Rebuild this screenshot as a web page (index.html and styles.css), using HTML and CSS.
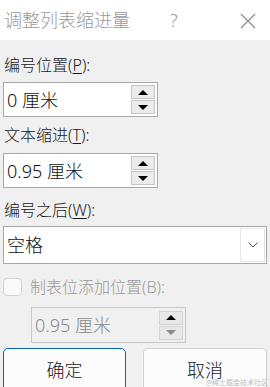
FILE: index.html
```html
<!DOCTYPE html>
<html lang="zh-CN">
<head>
    <meta charset="UTF-8">
    <meta name="viewport" content="width=device-width, initial-scale=1.0">
    <title>调整列表缩进量</title>
    <link rel="stylesheet" href="styles.css">
</head>
<body>
    <div class="dialog">
        <div class="titlebar">
            <span class="title">调整列表缩进量</span>
            <span class="help">?</span>
            <svg class="close" width="16" height="16" viewBox="0 0 16 16">
                <path d="M1 1 L15 15 M15 1 L1 15" stroke="#8a8a8a" stroke-width="1.2" fill="none"/>
            </svg>
        </div>

        <div class="content">
            <!-- 编号位置 -->
            <label class="label first">编号位置(<u>P</u>):</label>
            <div class="spin">
                <span class="value">0 厘米</span>
                <div class="arrows">
                    <span class="arrow up"></span>
                    <span class="arrow down"></span>
                </div>
            </div>

            <!-- 文本缩进 -->
            <label class="label">文本缩进(<u>T</u>):</label>
            <div class="spin">
                <span class="value">0.95 厘米</span>
                <div class="arrows">
                    <span class="arrow up"></span>
                    <span class="arrow down"></span>
                </div>
            </div>

            <!-- 编号之后 -->
            <label class="label third">编号之后(<u>W</u>):</label>
            <div class="select">
                <span class="value">空格</span>
                <div class="drop">
                    <svg width="10" height="6" viewBox="0 0 10 6">
                        <path d="M0.5 0.5 L5 5 L9.5 0.5" stroke="#555" stroke-width="1" fill="none"/>
                    </svg>
                </div>
            </div>

            <!-- 制表位 -->
            <div class="check-row">
                <span class="checkbox"></span>
                <span class="check-label">制表位添加位置(B):</span>
            </div>
            <div class="spin disabled">
                <span class="value">0.95 厘米</span>
                <div class="arrows">
                    <span class="arrow up"></span>
                    <span class="arrow down"></span>
                </div>
            </div>

            <div class="buttons">
                <button class="btn primary">确定</button>
                <button class="btn">取消</button>
            </div>
            <span class="watermark">@稀土掘金技术社区</span>
        </div>
    </div>
</body>
</html>
```

FILE: styles.css
```css
* {
    margin: 0;
    padding: 0;
    box-sizing: border-box;
    font-family: 'Noto Sans', 'Noto Sans CJK SC', sans-serif;
}

body {
    width: 270px;
    height: 387px;
    overflow: hidden;
    background: #f0f0f0;
}

.dialog {
    height: 387px;
    display: flex;
    flex-direction: column;
}

.titlebar {
    height: 40px;
    flex-shrink: 0;
    background: #ffffff;
    display: flex;
    align-items: center;
    padding-left: 4px;
}

.title {
    font-size: 18px;
    font-weight: 300;
    color: #9a9a9a;
    width: 166px;
    line-height: 20px;
}

.help {
    font-size: 18px;
    font-weight: 300;
    color: #9a9a9a;
    width: 70px;
    line-height: 20px;
}

.close {
    margin-top: 1px;
}

.content {
    position: relative;
    flex: 1;
    min-height: 0;
    padding: 0 3px;
    display: flex;
    flex-direction: column;
}

.label {
    display: block;
    font-size: 16px;
    font-weight: 300;
    line-height: 20px;
    color: #1a1a1a;
    padding-left: 1px;
    margin-top: 8px;
    margin-bottom: 8px;
}

.label.first {
    margin-top: 15px;
    margin-bottom: 7px;
}

.label.third {
    margin-top: 12px;
    margin-bottom: 6px;
}

.label u {
    text-decoration-thickness: 1px;
    text-underline-offset: 2px;
}

.spin {
    flex-shrink: 0;
    width: 155px;
    height: 35px;
    background: #ffffff;
    border: 1px solid #a8a8a8;
    display: flex;
    align-items: center;
    justify-content: space-between;
    padding: 2px 2px 2px 3px;
}

.value {
    font-size: 18px;
    font-weight: 300;
    color: #111;
    line-height: 22px;
}

.arrows {
    width: 24px;
    height: 29px;
    display: flex;
    flex-direction: column;
    gap: 1px;
}

.arrow {
    flex: 1;
    display: flex;
    align-items: center;
    justify-content: center;
    background: #ececec;
    border: 1px solid #c4c4c4;
}

.arrow::after {
    content: '';
    border-left: 5px solid transparent;
    border-right: 5px solid transparent;
}

.arrow.up::after {
    border-bottom: 5px solid #000;
}

.arrow.down::after {
    border-top: 5px solid #000;
}

.select {
    flex-shrink: 0;
    width: 264px;
    height: 38px;
    background: #ffffff;
    border: 1px solid #a8a8a8;
    display: flex;
    align-items: center;
    justify-content: space-between;
    padding: 1px 1px 1px 3px;
}

.drop {
    width: 25px;
    height: 34px;
    border: 1px solid #e4e4e4;
    display: flex;
    align-items: center;
    justify-content: center;
}

.check-row {
    flex-shrink: 0;
    display: flex;
    align-items: center;
    gap: 8px;
    margin-top: 13px;
    height: 20px;
}

.checkbox {
    width: 19px;
    height: 18px;
    border: 1px solid #d2d2d2;
    border-radius: 4px;
    background: #fafafa;
}

.check-label {
    font-size: 16px;
    font-weight: 300;
    color: #9a9a9a;
    line-height: 20px;
}

.spin.disabled {
    margin-top: 10px;
    margin-left: 28px;
    height: 36px;
    background: #f0f0f0;
    border-color: #c8c8c8;
}

.spin.disabled .value {
    color: #8a8a8a;
}

.spin.disabled .arrow {
    background: #e8e8e8;
    border-color: #d4d4d4;
}

.spin.disabled .arrow.down::after {
    border-top-color: #8a8a8a;
}

.buttons {
    flex-shrink: 0;
    display: flex;
    justify-content: space-between;
    margin-top: 5px;
}

.btn {
    width: 124px;
    height: 48px;
    font-size: 18px;
    font-weight: 300;
    line-height: 18px;
    color: #1a1a1a;
    background: #fcfcfc;
    border: 1px solid #d0d0d0;
    border-radius: 5px;
    padding-bottom: 4px;
}

.btn.primary {
    border: 1.5px solid #0a64b4;
    width: 123px;
}

.watermark {
    position: absolute;
    right: 2px;
    bottom: 0;
    font-size: 7px;
    line-height: 8px;
    color: #c0c0c0;
}
```
